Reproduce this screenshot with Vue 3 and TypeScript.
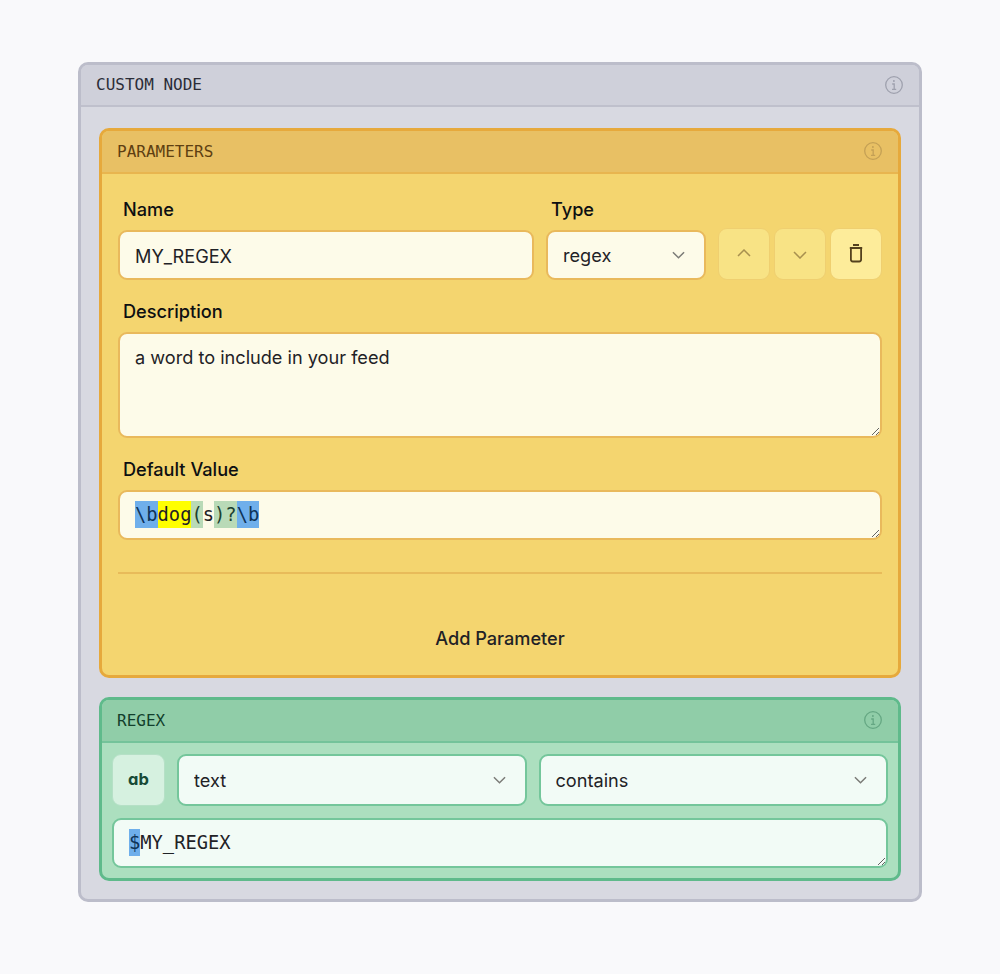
<script setup lang="ts">
interface Token { text: string; kind: string }
const tokens: Token[] = [
  { text: '\\b', kind: 'blue' },
  { text: 'dog', kind: 'yellow' },
  { text: '(', kind: 'green' },
  { text: 's', kind: 'plain' },
  { text: ')?', kind: 'green' },
  { text: '\\b', kind: 'blue' },
]
</script>

<template>
  <div class="page">
    <section class="node">
      <header class="head head-gray">
        <span>CUSTOM NODE</span>
        <svg class="info" viewBox="0 0 20 20"><circle cx="10" cy="10" r="8.3" /><path d="M8.2 9h2v5.2M8 14.4h4.2" /><circle class="dot" cx="9.9" cy="6.1" r="1" /></svg>
      </header>
      <div class="node-body">
        <section class="card card-yellow">
          <header class="head head-yellow">
            <span>PARAMETERS</span>
            <svg class="info" viewBox="0 0 20 20"><circle cx="10" cy="10" r="8.3" /><path d="M8.2 9h2v5.2M8 14.4h4.2" /><circle class="dot" cx="9.9" cy="6.1" r="1" /></svg>
          </header>
          <div class="params">
            <div class="row">
              <label class="field grow">
                <span class="label">Name</span>
                <input class="control name-input" value="MY_REGEX" />
              </label>
              <label class="field type-field">
                <span class="label">Type</span>
                <span class="select-wrap">
                  <select class="control select"><option>regex</option></select>
                  <svg class="chev" viewBox="0 0 14 8"><path d="M1 1l6 6 6-6" /></svg>
                </span>
              </label>
              <div class="buttons">
                <button class="btn off up" type="button" aria-label="Move up"><svg viewBox="0 0 14 8"><path d="M1 7l6-6 6 6" /></svg></button>
                <button class="btn off down" type="button" aria-label="Move down"><svg viewBox="0 0 14 8"><path d="M1 1l6 6 6-6" /></svg></button>
                <button class="btn trash" type="button" aria-label="Delete"><svg viewBox="0 0 14 19"><path d="M.8 4h12.4M4 1h6M1.9 4v11.6c0 1.2.7 1.9 1.9 1.9h6.4c1.2 0 1.9-.7 1.9-1.9V4" /></svg></button>
              </div>
            </div>
            <label class="field">
              <span class="label">Description</span>
              <textarea class="control area desc">a word to include in your feed</textarea>
            </label>
            <div class="field">
              <span class="label">Default Value</span>
              <div class="control area code-area"><span v-for="(t, i) in tokens" :key="i" :class="['tok', t.kind]">{{ t.text }}</span></div>
            </div>
            <hr class="rule" />
            <button class="add" type="button">Add Parameter</button>
          </div>
        </section>

        <section class="card card-green">
          <header class="head head-green">
            <span>REGEX</span>
            <svg class="info" viewBox="0 0 20 20"><circle cx="10" cy="10" r="8.3" /><path d="M8.2 9h2v5.2M8 14.4h4.2" /><circle class="dot" cx="9.9" cy="6.1" r="1" /></svg>
          </header>
          <div class="regex">
            <div class="regex-row">
              <button class="ab" type="button">ab</button>
              <span class="select-wrap g-select">
                <select class="control select"><option>text</option></select>
                <svg class="chev" viewBox="0 0 14 8"><path d="M1 1l6 6 6-6" /></svg>
              </span>
              <span class="select-wrap g-select">
                <select class="control select"><option>contains</option></select>
                <svg class="chev" viewBox="0 0 14 8"><path d="M1 1l6 6 6-6" /></svg>
              </span>
            </div>
            <div class="control area code-area"><span class="tok blue">$</span>MY_REGEX</div>
          </div>
        </section>
      </div>
    </section>
  </div>
</template>

<style>
html, body { margin: 0; background: #f9f9fb; }
</style>

<style scoped>
.page {
  box-sizing: border-box;
  height: 974px;
  padding: 62px 78px 0;
  font-family: Inter, "Liberation Sans", sans-serif;
  color: #1f2226;
}
.node {
  box-sizing: border-box;
  height: 840px;
  border: 3px solid #bcbdca;
  border-radius: 10px;
  background: #d8d9e1;
  overflow: hidden;
}
.head {
  box-sizing: border-box;
  display: flex;
  align-items: center;
  justify-content: space-between;
  font-family: "DejaVu Sans Mono", monospace;
  font-size: 16px;
}
.head-gray {
  height: 42px;
  padding: 0 15px 1px 15px;
  background: #cfd0da;
  border-bottom: 2px solid #bfc0cc;
  color: #2b2d38;
}
.head-yellow {
  height: 43px;
  padding: 0 15px 1px 15px;
  background: #e8c064;
  border-bottom: 2px solid #e8b54f;
  color: #5e3f12;
}
.head-green {
  height: 43px;
  padding: 0 15px 1px 15px;
  background: #90cda8;
  border-bottom: 2px solid #74c39a;
  color: #123f2c;
}
.info { width: 20px; height: 20px; fill: none; stroke-width: 1.3; }
.info .dot { stroke: none; }
.head-gray .info { stroke: #9fa1ae; }
.head-gray .dot { fill: #9fa1ae; }
.head-yellow .info { stroke: #c4a055; }
.head-yellow .dot { fill: #c4a055; }
.head-green .info { stroke: #65a783; }
.head-green .dot { fill: #65a783; }

.node-body {
  display: flex;
  flex-direction: column;
  gap: 19px;
  padding: 21px 18px;
}
.card {
  box-sizing: border-box;
  border-width: 3px;
  border-style: solid;
  border-radius: 10px;
  overflow: hidden;
}
.card-yellow { height: 550px; border-color: #e6a93c; background: #f4d56f; }
.card-green { height: 184px; border-color: #5fba8b; background: #acdfbf; }

.params {
  display: flex;
  flex-direction: column;
  padding: 24px 16px 0;
}
.row { display: flex; align-items: flex-end; gap: 12px; margin-bottom: 20px; }
.field { display: flex; flex-direction: column; }
.grow { flex: 1; }
.type-field { width: 160px; }
.label {
  font-size: 18.15px;
  font-weight: 500;
  line-height: 23px;
  margin: 0 0 9px 5px;
  color: #0d0f12;
}
.control {
  box-sizing: border-box;
  width: 100%;
  height: 50px;
  padding: 0 15px;
  border: 2px solid #e9b95c;
  border-radius: 9px;
  background: #fdfbe9;
  font-family: Inter, "Liberation Sans", sans-serif;
  font-size: 18.15px;
  color: #1f2226;
  outline: none;
  display: block;
}
.name-input { padding-top: 2px; }
.select-wrap { position: relative; display: block; }
.select { appearance: none; -webkit-appearance: none; }
.chev {
  position: absolute;
  right: 21px;
  top: 50%;
  width: 13px;
  height: 8px;
  margin-top: -4px;
  fill: none;
  stroke: #7c7c78;
  stroke-width: 1.6;
  pointer-events: none;
}
.buttons { display: flex; gap: 4px; }
.btn {
  box-sizing: border-box;
  width: 52px;
  height: 52px;
  padding: 0;
  border: 1px solid #efcf70;
  border-radius: 9px;
  display: flex;
  align-items: center;
  justify-content: center;
}
.btn svg { fill: none; }
.off { background: #f8e385; }
.off svg { width: 14px; height: 8px; stroke: #a8904f; stroke-width: 1.5; }
.up svg { margin-top: -2px; }
.down svg { margin-top: 2px; }
.trash { background: #fdec9a; }
.trash svg { width: 14px; height: 19px; margin-top: -2px; stroke: #54411d; stroke-width: 1.8; }

.area {
  height: auto;
  padding: 10px 15px;
  overflow: auto;
  resize: vertical;
}
.desc {
  height: 106px;
  margin-bottom: 20px;
  line-height: 27px;
}
.code-area {
  height: 50px;
  padding-top: 9px;
  font-family: "DejaVu Sans Mono", monospace;
  font-size: 18.75px;
  line-height: 27px;
}
.tok { display: inline-block; height: 27px; }
.blue { background: #6fafeb; color: #0e3358; }
.yellow { background: #ffff00; }
.green { background: #b9dab7; color: #1c4030; }
.rule {
  width: 100%;
  margin: 32px 0 0;
  border: 0;
  border-top: 2px solid #e8bb5a;
}
.add {
  margin-top: 52px;
  padding: 0;
  border: 0;
  background: none;
  font-family: Inter, "Liberation Sans", sans-serif;
  font-size: 18.15px;
  font-weight: 500;
  line-height: 24px;
  color: #1f2226;
}

.regex { display: flex; flex-direction: column; gap: 12px; padding: 11px 10px 0; }
.regex-row { display: flex; gap: 12px; }
.ab {
  box-sizing: border-box;
  flex: 0 0 53px;
  height: 52px;
  padding: 0 0 3px;
  border: 1px solid #b5e0c6;
  border-radius: 9px;
  background: #d6f1e0;
  font-family: Inter, "Liberation Sans", sans-serif;
  font-feature-settings: "cv11";
  font-size: 16.5px;
  font-weight: 700;
  color: #174a36;
}
.g-select { flex: 1; }
.card-green .control { border-color: #74c69b; background: #f2fbf6; }
.g-select .control { height: 52px; padding-bottom: 1px; }
</style>
